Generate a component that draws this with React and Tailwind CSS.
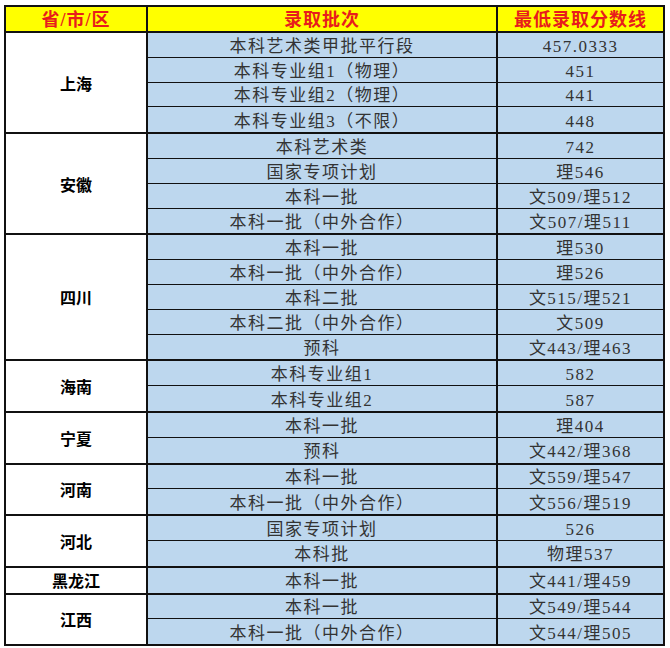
import React from 'react';

const groups = [
  {
    name: '上海',
    rows: [
      ['本科艺术类甲批平行段', '457.0333'],
      ['本科专业组1（物理）', '451'],
      ['本科专业组2（物理）', '441'],
      ['本科专业组3（不限）', '448'],
    ],
  },
  {
    name: '安徽',
    rows: [
      ['本科艺术类', '742'],
      ['国家专项计划', '理546'],
      ['本科一批', '文509/理512'],
      ['本科一批（中外合作）', '文507/理511'],
    ],
  },
  {
    name: '四川',
    rows: [
      ['本科一批', '理530'],
      ['本科一批（中外合作）', '理526'],
      ['本科二批', '文515/理521'],
      ['本科二批（中外合作）', '文509'],
      ['预科', '文443/理463'],
    ],
  },
  {
    name: '海南',
    rows: [
      ['本科专业组1', '582'],
      ['本科专业组2', '587'],
    ],
  },
  {
    name: '宁夏',
    rows: [
      ['本科一批', '理404'],
      ['预科', '文442/理368'],
    ],
  },
  {
    name: '河南',
    rows: [
      ['本科一批', '文559/理547'],
      ['本科一批（中外合作）', '文556/理519'],
    ],
  },
  {
    name: '河北',
    rows: [
      ['国家专项计划', '526'],
      ['本科批', '物理537'],
    ],
  },
  {
    name: '黑龙江',
    rows: [['本科一批', '文441/理459']],
  },
  {
    name: '江西',
    rows: [
      ['本科一批', '文549/理544'],
      ['本科一批（中外合作）', '文544/理505'],
    ],
  },
];

const serif = "font-['Liberation_Serif','Noto_Sans_CJK_SC',serif]";

export default function App() {
  return (
    <div className="w-[670px] h-[648px] bg-white overflow-hidden pt-[5px] pl-[4px]">
      <div className="w-[661px] border-2 border-[#111]">
        {/* header */}
        <div className={`flex h-[26px] bg-[#ffff00] border-b-2 border-[#111] text-[#e81c1c] font-bold text-[18px] tracking-[1px] leading-none ${serif}`}>
          <div className="w-[140px] flex items-center justify-center pt-[2px]">省/市/区</div>
          <div className="w-[350px] border-l-2 border-[#111] flex items-center justify-center pt-[2px]">录取批次</div>
          <div className="flex-1 border-l-2 border-[#111] flex items-center justify-center pt-[2px]">最低录取分数线</div>
        </div>

        <div className="divide-y-2 divide-[#111]">
          {groups.map(g => (
            <div key={g.name} className="flex">
              <div className="w-[140px] flex items-center justify-center bg-white text-black font-bold text-[16px] font-['Noto_Sans_CJK_SC',sans-serif]">
                {g.name}
              </div>
              <div className="flex-1 border-l-2 border-[#111] divide-y divide-[#111]">
                {g.rows.map(([batch, score]) => (
                  <div key={batch} className={`flex h-[24.8px] bg-[#bdd7ee] text-[#333] text-[17px] tracking-[1.5px] leading-none ${serif}`}>
                    <div className="w-[348px] flex items-center justify-center pt-[3px]">{batch}</div>
                    <div className="flex-1 border-l-2 border-[#111] flex items-center justify-center pt-[3px]">{score}</div>
                  </div>
                ))}
              </div>
            </div>
          ))}
        </div>
      </div>
    </div>
  );
}
